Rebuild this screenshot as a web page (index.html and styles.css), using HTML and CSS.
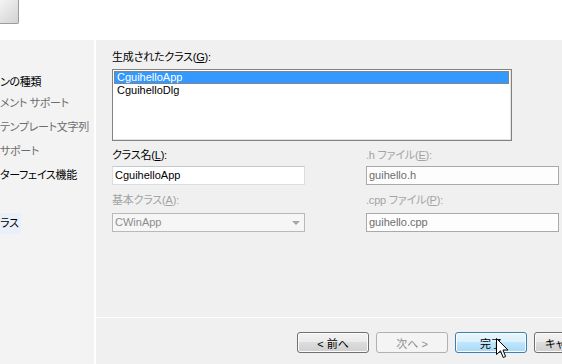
FILE: index.html
```html
<!DOCTYPE html>
<html lang="ja">
<head>
    <meta charset="UTF-8">
    <meta name="viewport" content="width=device-width, initial-scale=1.0">
    <title>MFC アプリケーション ウィザード</title>
    <link rel="stylesheet" href="styles.css">
</head>
<body>
    <div class="top">
        <div class="corner-btn"></div>
    </div>
    <div class="main">
        <ul class="nav">
            <li class="nav-item">ンの種類</li>
            <li class="nav-item off">メント サポート</li>
            <li class="nav-item off">テンプレート文字列</li>
            <li class="nav-item off">サポート</li>
            <li class="nav-item">ターフェイス機能</li>
            <li class="nav-item"></li>
            <li class="nav-item"><span class="current">ラス</span></li>
        </ul>
        <div class="page">
            <div class="content">
                <div class="label">生成されたクラス(<u>G</u>):</div>
                <div class="listbox">
                    <div class="row selected">CguihelloApp</div>
                    <div class="row">CguihelloDlg</div>
                </div>
                <div class="fields">
                    <div class="field">
                        <div class="label">クラス名(<u>L</u>):</div>
                        <div class="input">CguihelloApp</div>
                    </div>
                    <div class="field disabled">
                        <div class="label">.h ファイル(<u>E</u>):</div>
                        <div class="input readonly">guihello.h</div>
                    </div>
                    <div class="field disabled">
                        <div class="label">基本クラス(<u>A</u>):</div>
                        <div class="input combo">CWinApp<span class="arrow"></span></div>
                    </div>
                    <div class="field disabled">
                        <div class="label">.cpp ファイル(<u>P</u>):</div>
                        <div class="input readonly">guihello.cpp</div>
                    </div>
                </div>
            </div>
            <div class="sep"></div>
            <div class="buttons">
                <button class="btn">&lt; 前へ</button>
                <button class="btn" disabled>次へ &gt;</button>
                <button class="btn hot">完了</button>
                <button class="btn">キャンセル</button>
            </div>
        </div>
    </div>
    <!-- mouse pointer over the finish button -->
    <svg class="cursor" width="13" height="21" viewBox="0 0 13 21">
        <path d="M0.5 0.5 V16.5 L4.5 12.8 L7.2 19.5 L9.6 18.5 L7 12 H12 Z" fill="#fff" stroke="#000" stroke-width="1" stroke-linejoin="miter"/>
    </svg>
</body>
</html>
```

FILE: styles.css
```css
body {
    margin: 0;
    width: 562px;
    height: 364px;
    overflow: hidden;
    position: relative;
    background-color: #fff;
    font-family: "Liberation Sans", "Noto Sans CJK JP", sans-serif;
    font-size: 11px;
    font-feature-settings: "palt";
    color: #000;
}
.top {
    height: 40px;
}
.corner-btn {
    width: 19px;
    height: 24px;
    box-sizing: border-box;
    border-right: 1px solid #9c9c9c;
    border-bottom: 1px solid #9c9c9c;
    border-bottom-right-radius: 2px;
    background: linear-gradient(135deg, #f4f4f4, #d2d2d2);
}
.main {
    display: flex;
    height: 324px;
}
.nav {
    width: 94px;
    flex-shrink: 0;
    margin: 0;
    padding: 34px 0 0;
    list-style: none;
    background-color: #f3f3f3;
    white-space: nowrap;
    overflow: hidden;
    letter-spacing: -0.3px;
}
.nav-item {
    height: 24px;
    line-height: 24px;
}
.nav-item:first-child {
    height: 17px;
    line-height: 17px;
}
.nav-item.off {
    color: #6d6d6d;
}
.current {
    display: inline-block;
    line-height: 21px;
    padding-right: 2px;
    background-color: #e9f0fa;
}
.page {
    flex: 1;
    margin-left: 2px;
    background-color: #f0f0f0;
    display: flex;
    flex-direction: column;
    overflow: hidden;
}
.content {
    flex: 1;
    padding: 10px 0 0 16px;
}
.label {
    height: 14px;
    line-height: 14px;
    white-space: nowrap;
    letter-spacing: -0.2px;
}
.listbox {
    width: 400px;
    height: 72px;
    box-sizing: border-box;
    margin-top: 5px;
    padding: 1px 2px 1px 1px;
    border: 1px solid #828282;
    background-color: #fff;
    box-shadow: inset -1px -1px 0 #e3e3e3;
}
.row {
    height: 13px;
    line-height: 11px;
    padding-left: 2px;
    box-sizing: border-box;
    border: 1px solid transparent;
}
.row.selected {
    background-color: #3399ff;
    color: #fff;
    border: 1px dotted #c8731e;
}
.fields {
    display: grid;
    grid-template-columns: 193px 193px;
    column-gap: 61px;
    row-gap: 8px;
    margin-top: 7px;
}
.field .label {
    margin-bottom: 4px;
}
.field.disabled .label {
    color: #a3a3a3;
}
.field:nth-child(n+3) .label {
    margin-bottom: 6px;
}
.input {
    position: relative;
    height: 19px;
    box-sizing: border-box;
    padding-left: 2px;
    line-height: 17px;
    border: 1px solid #dadde2;
    border-top-color: #c4c8cd;
    background-color: #fff;
    white-space: nowrap;
}
.input.readonly {
    border-color: #a9a9a9;
    background-color: #fdfdfd;
    color: #6d6d6d;
}
.input.combo {
    border-color: #b9b9b9;
    background-color: #f6f6f6;
    color: #8d8d8d;
}
.arrow {
    position: absolute;
    right: 4px;
    top: 7px;
    border-left: 4px solid transparent;
    border-right: 4px solid transparent;
    border-top: 4px solid #a6a6a6;
}
.sep {
    height: 1px;
    background-color: #fff;
}
.buttons {
    display: flex;
    gap: 7px;
    height: 46px;
    box-sizing: border-box;
    padding: 14px 0 0 201px;
}
.btn {
    flex-shrink: 0;
    width: 72px;
    height: 21px;
    padding: 0;
    border: 1px solid #707070;
    border-radius: 3px;
    background: linear-gradient(#f2f2f2 0%, #ebebeb 50%, #dddddd 50%, #cfcfcf 100%);
    box-shadow: inset 0 0 0 1px #fbfbfb;
    font-family: inherit;
    font-size: 11px;
    font-feature-settings: "palt";
    color: #000;
    white-space: nowrap;
}
.btn:disabled {
    border-color: #adb2b5;
    background: #f4f4f4;
    box-shadow: none;
    color: #8d8d8d;
}
.btn.hot {
    border-color: #3c7fb1;
    background: linear-gradient(#eaf6fd 0%, #d9f0fc 50%, #bee6fd 50%, #a7d9f5 100%);
}
.cursor {
    position: absolute;
    left: 496px;
    top: 338px;
}
```
